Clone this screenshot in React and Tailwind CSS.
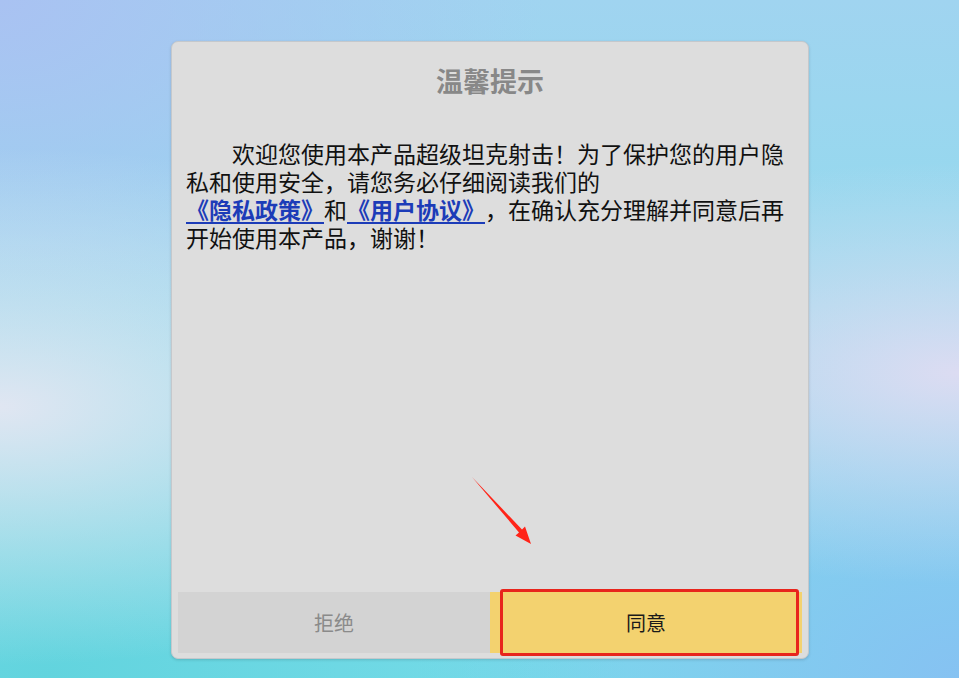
import React from 'react';

const bg =
  "bg-[radial-gradient(ellipse_at_0%_60%,#e0e6f2_0%,transparent_45%),radial-gradient(ellipse_at_100%_55%,#dcdcf2_0%,transparent_40%),radial-gradient(ellipse_at_5%_100%,#62d4de_0%,transparent_45%),radial-gradient(ellipse_at_0%_0%,#a9c2f2_0%,transparent_40%),radial-gradient(ellipse_at_100%_100%,#86c2f2_0%,transparent_40%),linear-gradient(180deg,#a0d4f0_0%,#8cdcec_60%,#78dcea_100%)]";

const Arrow = () => (
  <svg className="absolute left-0 top-0 pointer-events-none" width="959" height="678">
    <polygon
      points="472,477 519,532.5 515.5,535.5 531,544 525,526.5 522,529.5"
      fill="#ff2418"
    />
  </svg>
);

export default function App() {
  return (
    <div className={`relative w-[959px] h-[678px] overflow-hidden ${bg} font-['Noto_Sans_CJK_SC','Noto_Sans',sans-serif]`}>
      <div className="ml-[171px] mt-[41px] w-[638px] h-[618px] flex flex-col rounded-[7px] border border-[#c4c8cc] bg-[#dddddd] shadow-[0_1px_3px_rgba(0,0,0,0.15)]">
        {/* Title */}
        <div className="pt-[21px] text-center text-[27px] leading-[36px] font-bold text-[#888888]">
          温馨提示
        </div>

        {/* Body */}
        <div className="flex-1 px-[14px] pt-[40px]">
          <p className="indent-[46px] text-[23px] leading-[28px] text-[#111111] break-all [text-spacing-trim:space-all]">
            欢迎您使用本产品超级坦克射击！为了保护您的用户隐私和使用安全，请您务必仔细阅读我们的
            <br />
            <span className="font-bold text-[#1c3cb8] underline underline-offset-[3px]">《隐私政策》</span>
            和
            <span className="font-bold text-[#1c3cb8] underline underline-offset-[3px]">《用户协议》</span>
            ，在确认充分理解并同意后再开始使用本产品，谢谢！
          </p>
        </div>

        {/* Buttons */}
        <div className="flex px-[6px] pb-[5px]">
          <button className="w-[312px] h-[61px] bg-[#d3d3d3] text-[20px] text-[#8a8a8a]">
            拒绝
          </button>
          <div className="relative flex-1">
            <button className="w-full h-[61px] bg-[#f3d26f] text-[20px] text-[#1a1a1a]">
              同意
            </button>
            <div className="absolute left-[10px] right-[3px] -top-[3px] -bottom-[3px] border-[3px] border-[#e8251c] rounded-[3px] pointer-events-none" />
          </div>
        </div>
      </div>
      <Arrow />
    </div>
  );
}
